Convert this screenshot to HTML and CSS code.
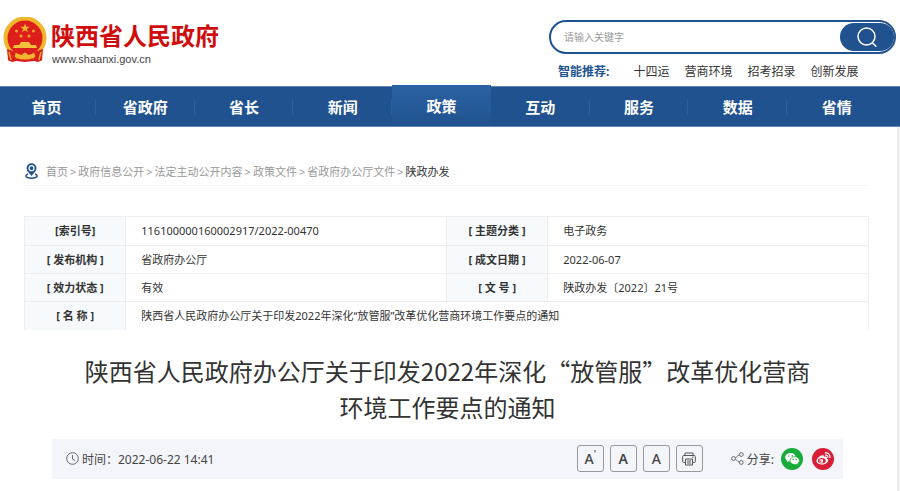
FILE: index.html
```html
<!DOCTYPE html>
<html lang="zh-CN">
<head>
<meta charset="utf-8">
<meta name="viewport" content="width=device-width, initial-scale=1">
<title>陕西省人民政府</title>
<link rel="stylesheet" href="styles.css">
</head>
<body>
<header class="header">
  <a class="brand" href="#">
    <svg class="emblem" viewBox="0 0 44 46" aria-hidden="true">
      <path d="M7 30 L5 43 Q8 46 13 44 L22 45 L31 44 Q36 46 39 43 L37 30 Z" fill="#d8201c"/>
      <circle cx="22" cy="21" r="19.5" fill="#dc1f1a" stroke="#f0b62c" stroke-width="4"/>
      <path d="M22 6.5 L23.2 9.8 H26.6 L23.9 11.9 L24.9 15.2 L22 13.2 L19.1 15.2 L20.1 11.9 L17.4 9.8 H20.8 Z" fill="#f0b62c"/>
      <g fill="#f0a62c"><circle cx="13.500" cy="14" r="1.500"/><circle cx="30.500" cy="14" r="1.500"/><circle cx="18" cy="19" r="1.500"/><circle cx="26" cy="19" r="1.500"/></g>
      <path d="M18 25 H26 L28 28 H33 L34 31 H10 L11 28 H16 Z" fill="#f6c03a"/>
      <path d="M4 32 L13 35 L10 45 L5 43 Z M40 32 L31 35 L34 45 L39 43 Z" fill="#d8201c"/>
      <path d="M13 42 Q15 37 19 38 Q22 33 25 38 Q29 37 31 42 Q27 39 24 41 Q22 43 20 41 Q17 39 13 42 Z" fill="#f3b52e"/>
      <path d="M6 35 L8 43 M38 35 L36 43" stroke="#efa329" stroke-width="1.500"/>
    </svg>
    <span class="brand-text">
      <span class="brand-name">陕西省人民政府</span>
      <span class="brand-url">www.shaanxi.gov.cn</span>
    </span>
  </a>
  <div class="search-area">
    <form class="search">
      <input class="search-input" type="text" placeholder="请输入关键字" aria-label="请输入关键字">
      <button class="search-button" type="button" aria-label="搜索">
        <svg width="22" height="22" viewBox="0 0 22 22" fill="none" stroke="#fff" stroke-width="1.500" stroke-linecap="round"><circle cx="10.500" cy="10.500" r="8.500"/><path d="M16.500 17 L20 20.300"/></svg>
      </button>
    </form>
    <div class="hot">
      <strong class="hot-label">智能推荐:</strong>
      <a href="#">十四运</a><a href="#">营商环境</a><a href="#">招考招录</a><a href="#">创新发展</a>
    </div>
  </div>
</header>
<nav class="nav">
  <div class="nav-list">
    <a href="#">首页</a><a href="#">省政府</a><a href="#">省长</a><a href="#">新闻</a><a class="active" href="#">政策</a><a href="#">互动</a><a href="#">服务</a><a href="#">数据</a><a href="#">省情</a>
  </div>
</nav>
<main class="page">
  <div class="crumbs">
    <svg class="pin" width="13" height="16" viewBox="0 0 13 16" aria-hidden="true">
      <path d="M3 11 Q0.800 11.800 0.800 13 Q1.500 15.200 6.500 15.200 Q11.500 15.200 12.200 13 Q12.200 11.800 10 11" fill="none" stroke="#20528f" stroke-width="1.400"/>
      <path d="M6.500 0.300 A5 5 0 0 1 11.500 5.300 C11.500 8 9 10 6.500 13 C4 10 1.500 8 1.500 5.300 A5 5 0 0 1 6.500 0.300 Z" fill="#20528f"/>
      <circle cx="6.500" cy="5.200" r="2.500" fill="none" stroke="#fff" stroke-width="1.200"/>
    </svg>
    <a href="#">首页</a><span>&gt;</span><a href="#">政府信息公开</a><span>&gt;</span><a href="#">法定主动公开内容</a><span>&gt;</span><a href="#">政策文件</a><span>&gt;</span><a href="#">省政府办公厅文件</a><span>&gt;</span><a class="current" href="#">陕政办发</a>
  </div>
  <table class="info">
    <colgroup><col class="col-label"><col class="col-value"><col class="col-label"><col class="col-value"></colgroup>
    <tr><th scope="row">[索引号]</th><td>116100000160002917/2022-00470</td><th scope="row">[ 主题分类 ]</th><td>电子政务</td></tr>
    <tr><th scope="row">[ 发布机构 ]</th><td>省政府办公厅</td><th scope="row">[ 成文日期 ]</th><td>2022-06-07</td></tr>
    <tr><th scope="row">[ 效力状态 ]</th><td>有效</td><th scope="row">[ 文 号 ]</th><td>陕政办发〔2022〕21号</td></tr>
    <tr><th scope="row">[ 名 称 ]</th><td colspan="3">陕西省人民政府办公厅关于印发2022年深化“放管服”改革优化营商环境工作要点的通知</td></tr>
  </table>
  <article class="article">
    <h1>陕西省人民政府办公厅关于印发2022年深化“放管服”改革优化营商环境工作要点的通知</h1>
    <div class="meta">
      <div class="time">
        <svg width="13" height="13" viewBox="0 0 13 13" fill="none" stroke="#666" aria-hidden="true"><circle cx="6.500" cy="6.500" r="5.800"/><path d="M6.500 3 V7 L9 8.500"/></svg>
        <span>时间：2022-06-22 14:41</span>
      </div>
      <div class="tools">
        <button type="button" aria-label="放大字号">A<sup>'</sup></button>
        <button type="button" class="heavy">A</button>
        <button type="button">A</button>
        <button type="button" aria-label="打印">
          <svg width="14" height="14" viewBox="0 0 14 14" fill="none" stroke="#555"><path d="M3 3.500 V1 H11 V3.500 M3 10.500 H1.500 Q0.700 10.500 0.700 9.500 V4.500 Q0.700 3.500 1.700 3.500 H12.300 Q13.300 3.500 13.300 4.500 V9.500 Q13.300 10.500 12.500 10.500 H11 M3.500 7 H10.500 V13 H3.500 Z M5 9 H9 M5 11 H9 M10 5.200 H11.500"/></svg>
        </button>
      </div>
      <div class="share">
        <svg width="13" height="13" viewBox="0 0 13 13" fill="none" stroke="#666" aria-hidden="true"><circle cx="2.500" cy="6.500" r="1.900"/><circle cx="10.300" cy="2.500" r="1.900"/><circle cx="10.300" cy="10.500" r="1.900"/><path d="M4.400 6 L5.800 4.600 Q6.500 3.500 8.300 2.800 M4.400 7 L5.800 8.400 Q6.500 9.500 8.300 10.200"/></svg>
        <span>分享:</span>
        <a class="wechat" href="#" aria-label="微信"><svg width="22" height="22" viewBox="0 0 22 22"><circle cx="11" cy="11" r="11" fill="#17ab39"/><path d="M9.500 5 C6.500 5 4.200 6.900 4.200 9.300 C4.200 10.700 5 11.900 6.200 12.700 L5.700 14.300 L7.600 13.300 L9.500 13.600 C12.500 13.600 14.700 11.700 14.700 9.300 C14.700 6.900 12.500 5 9.500 5 Z" fill="#fff"/><path d="M13.700 8.700 C16.400 8.700 18.400 10.400 18.400 12.600 C18.400 13.800 17.800 14.800 16.800 15.500 L17.200 17 L15.500 16.200 L13.700 16.500 C11 16.500 9 14.800 9 12.600 C9 10.400 11 8.700 13.700 8.700 Z" fill="#fff" stroke="#17ab39" stroke-width="0.700"/><g fill="#17ab39"><circle cx="7.800" cy="8" r="0.800"/><circle cx="11.300" cy="8" r="0.800"/><circle cx="12.200" cy="11.500" r="0.700"/><circle cx="15.200" cy="11.500" r="0.700"/></g></svg></a>
        <a href="#" aria-label="微博"><svg width="22" height="22" viewBox="0 0 22 22"><circle cx="11" cy="11" r="11" fill="#d81e36"/><path d="M9.500 7.500 C11 6.800 12.300 7.300 11.900 8.900 C14 8.100 15.400 8.800 14.800 10.500 C16.300 11 16.600 12.400 15.800 13.700 C14.600 15.700 11.900 16.600 9.400 16.500 C6.300 16.400 4.200 14.800 4.500 12.600 C4.800 10.700 7.200 8.300 9.500 7.500 Z" fill="#fff"/><ellipse cx="9.800" cy="12.800" rx="3.900" ry="2.700" fill="#d81e36"/><circle cx="9.300" cy="13" r="1.900" fill="#fff"/><circle cx="8.800" cy="13.300" r="0.800" fill="#d81e36"/><path d="M13.300 4.900 A4 4 0 0 1 17.900 9.700 M13.600 7.100 A1.900 1.900 0 0 1 15.800 9.200" fill="none" stroke="#fff" stroke-width="1.200" stroke-linecap="round"/></svg></a>
      </div>
    </div>
  </article>
</main>
</body>
</html>
```
FILE: styles.css
```css
* {
  box-sizing: border-box;
}

body {
  margin: 0;
  min-height: 100vh;
  display: flex;
  flex-direction: column;
  background: #fff;
  color: #333;
  font-family: "Noto Sans", "Noto Sans CJK SC", sans-serif;
  font-size: 11px;
}

a {
  color: inherit;
  text-decoration: none;
}

svg {
  display: block;
  flex: none;
}

/* Header */
.header {
  display: flex;
  justify-content: space-between;
  padding: 17px 4px 0 3px;
  height: 86px;
}

.brand {
  display: flex;
  align-items: flex-start;
  gap: 4px;
}

.emblem {
  width: 44px;
  height: 46px;
}

.brand-text {
  display: flex;
  flex-direction: column;
}

.brand-name {
  color: #d00d0d;
  font-family: "Noto Sans CJK SC", sans-serif;
  font-size: 24px;
  font-weight: 700;
  line-height: 36px;
}

.brand-url {
  color: #444;
  font-family: "Liberation Sans", sans-serif;
  font-size: 11px;
  line-height: 12px;
  padding-left: 1px;
}

.search-area {
  width: 347px;
  padding-top: 3px;
}

.search {
  display: flex;
  height: 34px;
  padding: 1px 0;
  border: 2px solid #20528f;
  border-radius: 17px;
}

.search-input {
  flex: 1;
  min-width: 0;
  padding: 0 13px;
  border: 0;
  background: transparent;
  font: inherit;
  font-size: 10px;
  outline: 0;
}

.search-input::placeholder {
  color: #999;
}

.search-button {
  display: flex;
  align-items: center;
  justify-content: center;
  width: 54px;
  padding: 0;
  border: 0;
  border-radius: 14px;
  background: #20528f;
}

.hot {
  display: flex;
  gap: 15px;
  padding: 9px 0 0 9px;
  font-size: 12px;
  line-height: 18px;
}

.hot-label {
  margin-right: 9px;
  color: #20528f;
}

/* Main navigation */
.nav {
  height: 41px;
  border-top: 1px solid #6086b1;
  border-bottom: 1px solid #6086b1;
  background: #20528f;
}

.nav-list {
  display: flex;
  margin: 0 14px 0 -3px;
}

.nav-list a {
  display: flex;
  flex: 1;
  align-items: center;
  justify-content: center;
  height: 39px;
  background: linear-gradient(#2f6199, #2f6199) right center / 1px 16px no-repeat;
  color: #fff;
  font-size: 15px;
  font-weight: 700;
}

.nav-list a:last-child {
  background: none;
}

.nav-list .active {
  height: 41px;
  margin-top: -2px;
  background: linear-gradient(#2c62a3, #20528f);
}

/* Page body */
.page {
  flex: 1;
  width: 100%;
  padding: 30px 28px 12px 24px;
  border-right: 3px solid #eee;
}

.crumbs {
  display: flex;
  align-items: center;
  gap: 2px;
  height: 29px;
  border-bottom: 1px solid #f6f6f6;
  color: #999;
  white-space: nowrap;
}

.pin {
  margin: 0 6px 0 1px;
}

.current {
  color: #333;
}

.info {
  width: 100%;
  margin-top: 30px;
  border-collapse: collapse;
  table-layout: fixed;
}

.col-label {
  width: 12%;
}

.col-value {
  width: 38%;
}

.info th,
.info td {
  height: 28px;
  padding: 0;
  border: 1px solid #eee;
  line-height: 16px;
}

.info tr:first-child > * {
  height: 29px;
}

.info tr:last-child > * {
  border-bottom: 0;
}

.info th {
  background: #f6fafd;
  font-weight: 700;
  text-align: center;
}

.info td {
  padding-left: 15px;
}

/* Article */
.article {
  padding: 0 26px 0 28px;
}

h1 {
  margin: 23px 0 14px;
  padding: 0 24px;
  font-family: "Noto Sans CJK SC", sans-serif;
  font-size: 24px;
  font-weight: 400;
  line-height: 36px;
  text-align: center;
}

.meta {
  display: flex;
  align-items: center;
  height: 40px;
  padding: 0 9px 0 14px;
  background: #f4f5fb;
  color: #444;
  font-size: 12px;
}

.time {
  display: flex;
  align-items: center;
  gap: 3px;
  margin-right: auto;
}

.tools {
  display: flex;
  gap: 6px;
}

.tools button {
  display: flex;
  align-items: center;
  justify-content: center;
  width: 27px;
  height: 27px;
  padding: 0;
  border: 1px solid #999;
  border-radius: 3px;
  background: transparent;
  color: #444;
  font: inherit;
  font-size: 14px;
  font-weight: 500;
}

.tools .heavy {
  font-weight: 600;
}

.tools sup {
  align-self: flex-start;
  font-size: 10px;
  line-height: 16px;
}

.share {
  display: flex;
  align-items: center;
  gap: 3px;
  margin-left: 28px;
}

.share .wechat {
  margin: 0 6px 0 4px;
}
```
